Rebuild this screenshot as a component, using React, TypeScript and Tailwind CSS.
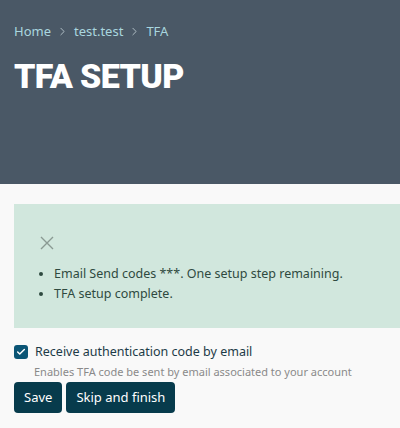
import { Check, ChevronRight } from 'lucide-react';

export default function App() {
    return (
        <div className="min-h-[428px] bg-[#f9f9f9] font-['Noto_Sans',sans-serif]">
            <header className="h-[184px] bg-[#4a5866] px-[14px] pt-[21px]">
                <nav className="flex items-center gap-[5px] text-[13px] leading-[20px] text-[#a9d6df]">
                    <span>Home</span>
                    <ChevronRight className="h-[13px] w-[13px] text-[#c4d3d8]" strokeWidth={1.5} />
                    <span>test.test</span>
                    <ChevronRight className="h-[13px] w-[13px] text-[#c4d3d8]" strokeWidth={1.5} />
                    <span>TFA</span>
                </nav>
                <h1 className="mt-[15px] font-['Roboto',sans-serif] text-[34px] font-black leading-[40px] tracking-[-0.6px] text-white">
                    TFA SETUP
                </h1>
            </header>

            <div className="ml-[14px] mt-[20px] h-[124px] bg-[#d1e7dd] pl-[26px] pt-[32px] text-[#2f4a40]">
                <svg width="14" height="14" viewBox="0 0 14 14" className="text-[#8a9a93]">
                    <path d="M1 1L13 13M13 1L1 13" stroke="currentColor" strokeWidth="1.4" />
                </svg>
                <ul className="mt-[14px] list-disc pl-[14px] text-[12.5px] leading-[20px]">
                    <li>Email Send codes ***. One setup step remaining.</li>
                    <li>TFA setup complete.</li>
                </ul>
            </div>

            <div className="px-[14px] pt-[15px]">
                <label className="flex items-center gap-[7px] text-[12.5px] text-[#1d3b47]">
                    <span className="flex h-[14px] w-[14px] items-center justify-center rounded-[3px] bg-[#0b5575]">
                        <Check className="h-[10px] w-[10px] text-white" strokeWidth={3.5} />
                    </span>
                    Receive authentication code by email
                </label>
                <p className="ml-[20px] mt-[3px] text-[11px] leading-[14px] text-[#8a8a8a]">
                    Enables TFA code be sent by email associated to your account
                </p>
                <div className="mt-[3px] flex gap-[4px]">
                    <button className="h-[31px] rounded-[4px] bg-[#073b4c] px-[10px] text-[13px] text-white">Save</button>
                    <button className="h-[31px] rounded-[4px] bg-[#073b4c] px-[10px] text-[13px] text-white">Skip and finish</button>
                </div>
            </div>
        </div>
    );
}
